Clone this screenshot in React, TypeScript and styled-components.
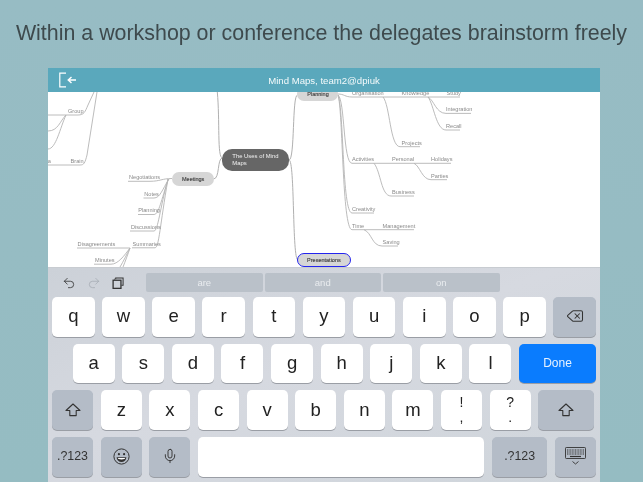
import { Delete, Mic, Redo2, Undo2 } from 'lucide-react';
import styled, { createGlobalStyle } from 'styled-components';

const GlobalStyle = createGlobalStyle`
    html, body {
        margin: 0;
        padding: 0;
        background: #96bcc3;
    }
`;

const Page = styled.div`
    width: 643px;
    height: 482px;
    overflow: hidden;
    display: flex;
    flex-direction: column;
    background: linear-gradient(180deg, #97bcc4 0%, #95bcc2 100%);
    font-family: 'Liberation Sans', Arial, sans-serif;
    filter: blur(0.3px);
`;

const Headline = styled.h1`
    height: 68px;
    margin: 0;
    display: flex;
    align-items: center;
    justify-content: center;
    font-size: 21.4px;
    font-weight: 400;
    color: #3e4a4d;
    white-space: nowrap;
    padding-bottom: 2px;
    box-sizing: border-box;
`;

const Device = styled.div`
    width: 552px;
    margin-left: 48px;
    flex: 1;
    display: flex;
    flex-direction: column;
`;

const TitleBar = styled.header`
    height: 24px;
    flex: none;
    position: relative;
    display: flex;
    align-items: center;
    justify-content: center;
    background: #5aa8bc;
    color: #f4fafb;
    font-size: 9.6px;
`;

const BackButton = styled.svg`
    position: absolute;
    left: 10px;
    top: 4px;
`;

const Canvas = styled.div`
    height: 175px;
    flex: none;
    position: relative;
    overflow: hidden;
    background: #fff;
`;

const MapLines = styled.svg`
    position: absolute;
    inset: 0;
    text {
        font-size: 5.6px;
        fill: #8a8a8a;
    }
`;

const Topic = styled.div<{ $x: number; $y: number; $w: number; $h: number; $dark?: boolean; $selected?: boolean }>`
    position: absolute;
    left: ${({ $x }) => $x - 48}px;
    top: ${({ $y }) => $y - 92}px;
    width: ${({ $w }) => $w}px;
    height: ${({ $h }) => $h}px;
    box-sizing: border-box;
    display: flex;
    align-items: center;
    padding-left: ${({ $selected }) => ($selected ? 8.8 : 10)}px;
    border-radius: ${({ $dark }) => ($dark ? 10 : 7)}px;
    border: ${({ $selected }) => ($selected ? '1.5px solid #2424ee' : 'none')};
    background: ${({ $dark }) => ($dark ? '#666' : '#d6d6d6')};
    color: ${({ $dark }) => ($dark ? '#f2f2f2' : '#444')};
    font-size: ${({ $dark }) => ($dark ? 5.9 : 5.5)}px;
    line-height: 7px;
    -webkit-text-stroke: ${({ $dark }) => ($dark ? 0 : 0.15)}px;
`;

const Keyboard = styled.div`
    flex: 1;
    display: flex;
    flex-direction: column;
    gap: 7px;
    padding: 5px 4px 0;
    border-top: 1px solid #c8ccd1;
    box-sizing: border-box;
    background: linear-gradient(160deg, #ccd1d8 0%, #d6d9e0 45%, #cfd5db 100%);
`;

const Shortcuts = styled.div`
    height: 19px;
    display: flex;
    gap: 2px;
    margin-bottom: -2px;
`;

const Tools = styled.div`
    width: 92px;
    display: flex;
    align-items: center;
    gap: 11px;
    padding-left: 9.5px;
    box-sizing: border-box;
    color: #333;
`;

const Suggestion = styled.div`
    width: 116.5px;
    display: flex;
    align-items: center;
    justify-content: center;
    border-radius: 2px;
    background: #bac1c9;
    color: #e9ecef;
    font-size: 9.5px;
`;

const Row = styled.div<{ $inset?: number }>`
    height: 39.7px;
    display: flex;
    gap: 7.6px;
    padding-left: ${({ $inset }) => $inset ?? 0}px;
`;

const Key = styled.div<{ $w?: number; $kind?: 'letter' | 'action' | 'done' }>`
    flex: ${({ $w }) => ($w ? `0 0 ${$w}px` : '1 1 0')};
    display: flex;
    flex-direction: column;
    align-items: center;
    justify-content: center;
    padding-bottom: 1px;
    border-radius: 5px;
    box-sizing: border-box;
    font-size: 18.5px;
    color: #222;
    background: ${({ $kind }) =>
        $kind === 'action' ? '#b4bcc7' : $kind === 'done' ? '#0a7cfe' : '#fff'};
    box-shadow: 0 1px 0 #9a9ea5;
`;

const SmallLabel = styled.span<{ $light?: boolean }>`
    font-size: ${({ $light }) => ($light ? 12 : 12.4)}px;
    color: ${({ $light }) => ($light ? '#e8f2ff' : '#333')};
`;

const Punct = styled.span`
    font-size: 14px;
    line-height: 15px;
    display: block;
    text-align: center;
`;

const BackIcon = () => (
    <BackButton width="20" height="16" viewBox="0 0 20 16" fill="none" stroke="#fff" strokeWidth="1.2">
        <path d="M8 1.2H1.8V14.8H8" />
        <path d="M18 8H10.5M13.5 5L10.2 8L13.5 11" strokeWidth="1.4" />
    </BackButton>
);

const CopyIcon = () => (
    <svg width="12" height="12" viewBox="0 0 13 13" fill="none" stroke="#333" strokeWidth="1.1">
        <path d="M4 2.5V1H12V9H10.2" />
        <path d="M2.8 2.7V1.9" />
        <rect x="1.2" y="3.5" width="8.5" height="8.8" strokeWidth="1.4" />
    </svg>
);

const ShiftIcon = () => (
    <svg width="16" height="14" viewBox="0 0 16 14" fill="none" stroke="#333" strokeWidth="1.1" strokeLinejoin="round">
        <path d="M8 1L15 7.5H11.2V12.6H4.8V7.5H1Z" />
    </svg>
);

const EmojiIcon = () => (
    <svg width="17" height="17" viewBox="0 0 17 17" fill="none" stroke="#333" strokeWidth="1">
        <circle cx="8.5" cy="8.5" r="7.6" />
        <circle cx="5.9" cy="6.2" r="1.1" fill="#333" stroke="none" />
        <circle cx="11.1" cy="6.2" r="1.1" fill="#333" stroke="none" />
        <path d="M3.6 9.2H13.4C13.2 12.2 11 14 8.5 14S3.8 12.2 3.6 9.2Z" fill="#333" stroke="none" />
        <path d="M4.8 10H12.2C12 11 11 11.4 8.5 11.4S5 11 4.8 10Z" fill="#fff" stroke="none" />
    </svg>
);

const KeyboardIcon = () => (
    <svg width="21" height="18" viewBox="0 0 21 18" fill="none" stroke="#333">
        <rect x="0.5" y="0.5" width="20" height="11" rx="0.8" strokeWidth="0.9" />
        <path d="M2 3H19M2 5H19M2 7H19" strokeWidth="1.1" strokeDasharray="1 0.6" />
        <path d="M5 9.5H16" strokeWidth="1.2" />
        <path d="M7.5 14.5L10.5 17L13.5 14.5" strokeWidth="0.9" />
    </svg>
);

// [text, x, baseline y]
const labels: [string, number, number][] = [
    ['Group', 68, 112.8],
    ['Brain', 70.6, 162.6],
    ['a', 47.8, 162.6],
    ['Negotiations', 129, 179.2],
    ['Notes', 144.3, 195.8],
    ['Planning', 138.2, 212.4],
    ['Discussions', 131, 229],
    ['Summaries', 132.6, 245.6],
    ['Disagreements', 77.6, 245.6],
    ['Minutes', 95, 262.2],
    ['Organisation', 352, 94.8],
    ['Knowledge', 401.6, 94.8],
    ['Study', 446.6, 94.8],
    ['Integration', 446, 111.4],
    ['Recall', 446, 128],
    ['Projects', 401.6, 144.6],
    ['Activities', 352, 161.2],
    ['Personal', 392, 161.2],
    ['Holidays', 431, 161.2],
    ['Parties', 431, 177.8],
    ['Business', 392, 194.4],
    ['Creativity', 352, 211],
    ['Time', 352, 227.6],
    ['Management', 382.6, 227.6],
    ['Saving', 382.6, 244.2],
];

const thinBranches = [
    'M48 115H78C84 115 85 112 88 105L94 92',
    'M48 165H80C84 165 85 163 87 155L97 92',
    'M48 131C58 131 60 121 66 115',
    'M48 149C56 149 60 128 66 115',
    'M128 181.3H150C160 181.3 162 178.5 172 178.5',
    'M143.5 198H154C160 198 162 190 169 179',
    'M138 214.5H154C159 214.5 161 200 168.5 179',
    'M130 231H154C158 231 160 208 168 179',
    'M132 247.8H155C159 247.8 160 225 168 179',
    'M77 248H130',
    'M94 264.2H111C118 264.2 124 256 130 248',
    'M120 267C123 262 127 254 130 248',
    'M123 267C125 262 128 254 130 248',
    // Planning side
    'M338 94C344 94 345 97 352 97H460',
    'M428 97C434 100 436 113.4 446 113.4H471',
    'M428 97C434 105 436 130 446 130H460',
    'M383 97C390 105 390 146.7 400 146.7H420',
    'M338 95C345 100 343 163.3 352 163.3H451',
    'M414 163.3C420 166 422 179.7 431 179.7H447',
    'M374 163.3C381 172 381 196 391 196H414',
    'M338 95C344 110 342 213 352 213H374',
    'M338 95C343 110 342 229.7 352 229.7H414',
    'M364 229.7C372 233 372 246 382 246H398',
];

const mainBranches = [
    'M213.5 179C220 179 217 158 222.5 158',
    'M222.5 158C217 158 220 120 217.3 92',
    'M289 160C295 160 292 95 297.5 95',
    'M289 160C295 160 292 260 298 260',
];

const row1 = ['q', 'w', 'e', 'r', 't', 'y', 'u', 'i', 'o', 'p'];
const row2 = ['a', 's', 'd', 'f', 'g', 'h', 'j', 'k', 'l'];
const row3 = ['z', 'x', 'c', 'v', 'b', 'n', 'm'];

const App = () => {
    return (
        <Page>
            <GlobalStyle />
            <Headline>Within a workshop or conference the delegates brainstorm freely</Headline>
            <Device>
                <TitleBar>
                    <BackIcon />
                    Mind Maps, team2@dpiuk
                </TitleBar>
                <Canvas>
                    <MapLines width="552" height="175" viewBox="48 92 552 175" fill="none">
                        {thinBranches.map((d) => (
                            <path key={d} d={d} stroke="#b4b4b4" strokeWidth="0.9" />
                        ))}
                        {mainBranches.map((d) => (
                            <path key={d} d={d} stroke="#b0b0b0" strokeWidth="1" />
                        ))}
                        {labels.map(([text, x, y]) => (
                            <text key={text + x} x={x} y={y}>
                                {text}
                            </text>
                        ))}
                    </MapLines>
                    <Topic $x={222.3} $y={149.3} $w={66.7} $h={22} $dark>
                        The Uses of Mind
                        <br />
                        Maps
                    </Topic>
                    <Topic $x={172} $y={172} $w={41.5} $h={14}>
                        Meetings
                    </Topic>
                    <Topic $x={297.3} $y={87} $w={40.7} $h={14}>
                        Planning
                    </Topic>
                    <Topic $x={297.3} $y={253.3} $w={53.7} $h={14} $selected>
                        Presentations
                    </Topic>
                </Canvas>
                <Keyboard>
                    <Shortcuts>
                        <Tools>
                            <Undo2 size={14} strokeWidth={1.4} />
                            <Redo2 size={14} strokeWidth={1.1} color="#9da3ab" />
                            <CopyIcon />
                        </Tools>
                        <Suggestion>are</Suggestion>
                        <Suggestion>and</Suggestion>
                        <Suggestion>on</Suggestion>
                    </Shortcuts>
                    <Row>
                        {row1.map((k) => (
                            <Key key={k}>{k}</Key>
                        ))}
                        <Key $kind="action">
                            <Delete size={18} strokeWidth={1.4} color="#333" />
                        </Key>
                    </Row>
                    <Row $inset={20.7}>
                        {row2.map((k) => (
                            <Key key={k}>{k}</Key>
                        ))}
                        <Key $w={77} $kind="done">
                            <SmallLabel $light>Done</SmallLabel>
                        </Key>
                    </Row>
                    <Row>
                        <Key $w={41.3} $kind="action">
                            <ShiftIcon />
                        </Key>
                        {row3.map((k) => (
                            <Key key={k} $w={41}>
                                {k}
                            </Key>
                        ))}
                        <Key $w={41}>
                            <Punct>!</Punct>
                            <Punct>,</Punct>
                        </Key>
                        <Key $w={41}>
                            <Punct>?</Punct>
                            <Punct>.</Punct>
                        </Key>
                        <Key $w={56} $kind="action">
                            <ShiftIcon />
                        </Key>
                    </Row>
                    <Row>
                        <Key $w={41} $kind="action">
                            <SmallLabel>.?123</SmallLabel>
                        </Key>
                        <Key $w={41} $kind="action">
                            <EmojiIcon />
                        </Key>
                        <Key $w={41} $kind="action">
                            <Mic size={16} strokeWidth={1.4} color="#333" />
                        </Key>
                        <Key />
                        <Key $w={55.5} $kind="action">
                            <SmallLabel>.?123</SmallLabel>
                        </Key>
                        <Key $w={41} $kind="action">
                            <KeyboardIcon />
                        </Key>
                    </Row>
                </Keyboard>
            </Device>
        </Page>
    );
};

export default App;
